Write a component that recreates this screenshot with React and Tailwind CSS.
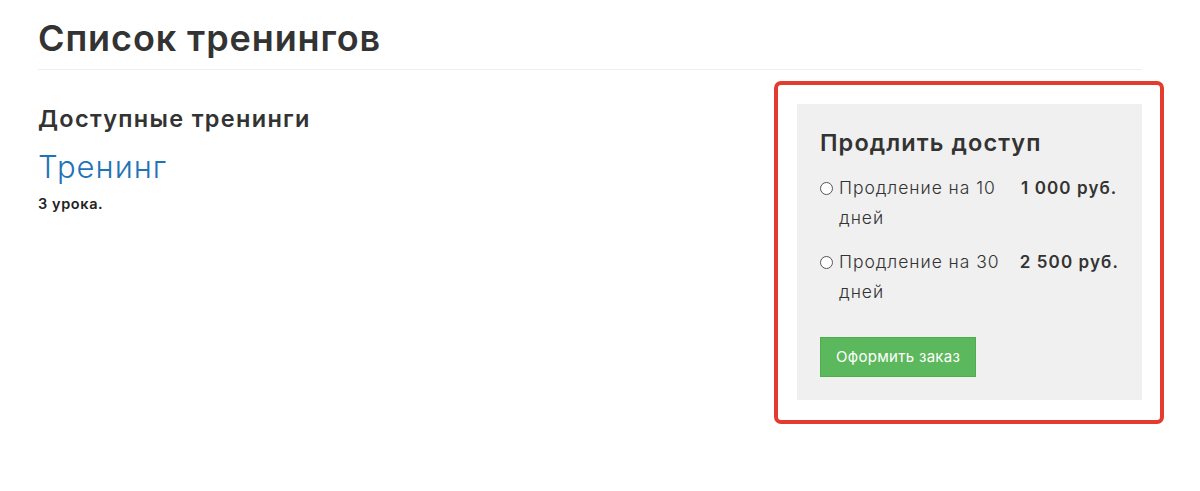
export default function App() {
  const items = [
    { label: "Продление на 10 дней", price: "1 000 руб." },
    { label: "Продление на 30 дней", price: "2 500 руб." },
  ];
  return (
    <div
      className="w-[1200px] h-[491px] bg-white text-[#333333] overflow-hidden"
      style={{ fontFamily: "Inter, 'Noto Sans', sans-serif" }}
    >
      <div className="pl-[38px] pr-[58px] pt-[16px]">
        <h1 className="text-[36px] leading-[44px] font-semibold tracking-[0.9px] pb-[9px] border-b border-[#eeeeee]">
          Список тренингов
        </h1>
        <div className="flex mt-[34px]">
          <div className="flex-1">
            <h3 className="text-[23.5px] leading-[30px] font-semibold tracking-[1.3px]">
              Доступные тренинги
            </h3>
            <a className="block mt-[15px] text-[31px] leading-[36px] font-light tracking-[1px] text-[#1f73b7]">
              Тренинг
            </a>
            <div className="mt-[9px] text-[14.5px] leading-[20px] font-semibold tracking-[0.6px] text-[#222]">
              3 урока.
            </div>
          </div>
          <div className="w-[390px] -mt-[23px] -mr-[22px]">
            <div className="rounded-[7px] border-4 border-[#e53a2f] pl-[19px] pr-[18px] pt-[19px] pb-[20px]">
              <div className="bg-[#f0f0f0] px-[23px] pt-[24px] pb-[23px]">
                <h3 className="text-[23.5px] leading-[30px] font-semibold tracking-[1.1px]">
                  Продлить доступ
                </h3>
                <div className="mt-[15px] flex flex-col gap-[14px]">
                  {items.map((it) => (
                    <div key={it.price} className="flex">
                      <div className="flex w-[201px]">
                        <span className="mt-[9px] w-[13px] h-[13px] rounded-full border border-[#555] bg-white shrink-0"></span>
                        <span className="ml-[6px] w-[178px] text-[17.5px] leading-[30px] font-light tracking-[0.95px]">
                          {it.label}
                        </span>
                      </div>
                      <div className="whitespace-nowrap text-[17px] leading-[30px] font-semibold tracking-[1.1px]">
                        {it.price}
                      </div>
                    </div>
                  ))}
                </div>
                <button className="mt-[30px] h-[40px] px-[15px] bg-[#5cb85c] border border-[#4cae4c] text-white text-[15px] tracking-[0.3px]">
                  Оформить заказ
                </button>
              </div>
            </div>
          </div>
        </div>
      </div>
    </div>
  );
}
